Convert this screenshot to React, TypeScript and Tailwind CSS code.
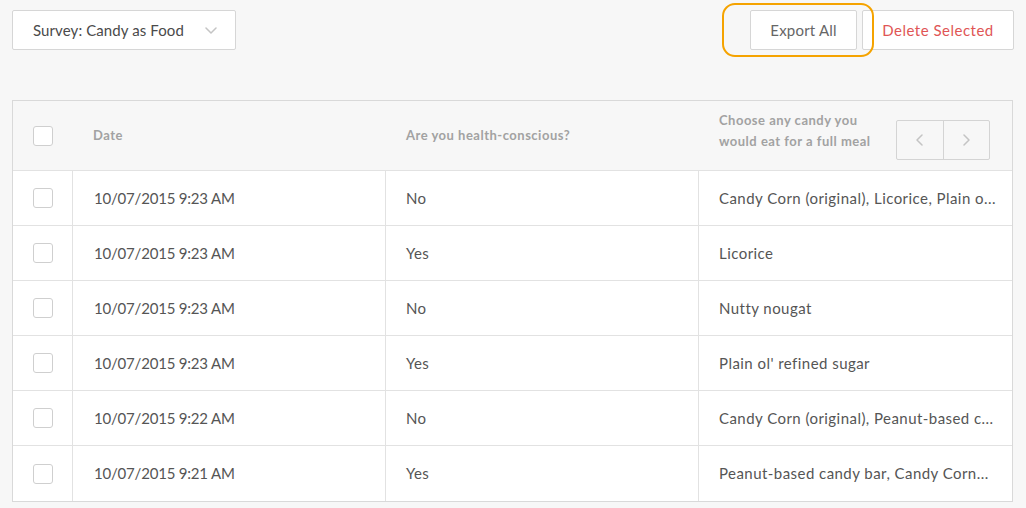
import React from "react";

const rows = [
  ["10/07/2015 9:23 AM", "No", "Candy Corn (original), Licorice, Plain o..."],
  ["10/07/2015 9:23 AM", "Yes", "Licorice"],
  ["10/07/2015 9:23 AM", "No", "Nutty nougat"],
  ["10/07/2015 9:23 AM", "Yes", "Plain ol' refined sugar"],
  ["10/07/2015 9:22 AM", "No", "Candy Corn (original), Peanut-based c..."],
  ["10/07/2015 9:21 AM", "Yes", "Peanut-based candy bar, Candy Corn..."],
];

function Checkbox() {
  return <div className="w-5 h-5 rounded-[3px] border border-[#cfcfcf] bg-white" />;
}

function Chevron({ dir }: { dir: "left" | "right" | "down" }) {
  const d =
    dir === "left" ? "M7 1 L2 6 L7 11" : dir === "right" ? "M2 1 L7 6 L2 11" : "M1 2 L6 7 L11 2";
  const w = dir === "down" ? 12 : 9;
  const h = dir === "down" ? 9 : 12;
  return (
    <svg width={w} height={h} viewBox={`0 0 ${w} ${h}`} fill="none">
      <path d={d} stroke="#c4c4c4" strokeWidth="1.5" strokeLinecap="round" strokeLinejoin="round" />
    </svg>
  );
}

export default function App() {
  return (
    <div
      className="w-[1026px] h-[508px] bg-[#f7f7f7] px-3 pt-[10px] text-[#555]"
      style={{ fontFamily: "Lato, 'Open Sans', sans-serif" }}
    >
      <div className="flex justify-between items-start">
        <div className="w-[224px] h-10 bg-white border border-[#d6d6d6] rounded-[2px] flex items-center justify-between pl-5 pr-[18px]">
          <span className="text-[15px] text-[#4a4a4a] tracking-[0.1px]">Survey: Candy as Food</span>
          <Chevron dir="down" />
        </div>
        <div className="flex items-start gap-[5px]">
          <div className="relative">
            <div className="absolute left-[-28px] top-[-7px] w-[152px] h-[54px] rounded-[13px] border-2 border-[#f5a300]" />
            <button className="w-[107px] h-10 bg-white border border-[#d6d6d6] rounded-[2px] text-[15px] text-[#666] tracking-[0.2px]">
              Export All
            </button>
          </div>
          <button className="w-[152px] h-10 bg-white border border-[#d6d6d6] rounded-[2px] text-[15px] text-[#e05555] tracking-[0.5px]">
            Delete Selected
          </button>
        </div>
      </div>

      <div className="mt-[50px] w-[1001px] border border-[#d9d9d9] bg-white">
        <div className="grid grid-cols-[60px_313px_313px_313px] h-[70px] bg-[#f7f7f7] border-b border-[#e2e2e2] text-[13px] font-bold text-[#a2a2a2] tracking-[0.5px]">
          <div className="flex items-center pl-5">
            <Checkbox />
          </div>
          <div className="flex items-center pl-5">Date</div>
          <div className="flex items-center pl-5">Are you health-conscious?</div>
          <div className="flex items-center justify-between pl-5 pr-[22px]">
            <div className="leading-[21px] pb-[9px]">
              Choose any candy you
              <br />
              would eat for a full meal
            </div>
            <div className="flex w-[94px] h-10 mt-[9px] border border-[#d4d4d4] rounded-[2px]">
              <div className="flex-1 flex items-center justify-center border-r border-[#d4d4d4]">
                <Chevron dir="left" />
              </div>
              <div className="flex-1 flex items-center justify-center">
                <Chevron dir="right" />
              </div>
            </div>
          </div>
        </div>
        {rows.map((r, i) => (
          <div
            key={i}
            className={`grid grid-cols-[60px_313px_313px_313px] h-[55px] text-[15px] text-[#555] ${
              i < rows.length - 1 ? "border-b border-[#e2e2e2]" : ""
            }`}
          >
            <div className="flex items-center pl-5 border-r border-[#e2e2e2]">
              <Checkbox />
            </div>
            <div className="flex items-center pl-[21px] border-r border-[#e2e2e2] tracking-[-0.2px]">{r[0]}</div>
            <div className="flex items-center pl-5 border-r border-[#e2e2e2] tracking-[0.3px]">{r[1]}</div>
            <div className="flex items-center pl-5 pr-2 min-w-0 whitespace-nowrap tracking-[0.45px]">{r[2]}</div>
          </div>
        ))}
      </div>
    </div>
  );
}
